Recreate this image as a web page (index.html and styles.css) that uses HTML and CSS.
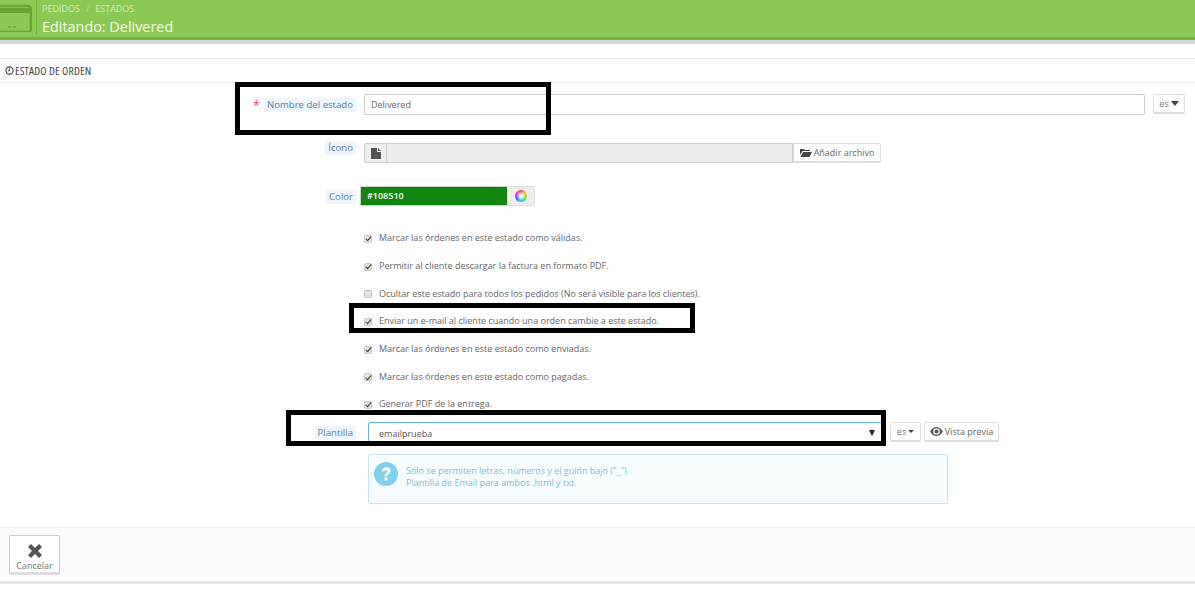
FILE: index.html
```html
<!DOCTYPE html>
<html lang="es">
<head>
<meta charset="utf-8">
<title>Editando: Delivered</title>
<link rel="stylesheet" href="styles.css">
</head>
<body>
<header class="head">
  <div class="head-icon">
    <svg width="32" height="32" viewBox="0 0 32 32"><rect x="-6" y="6" width="37" height="26" rx="3" fill="none" stroke="#6aa52f" stroke-width="2.5"/><rect x="-6" y="8" width="36" height="5" fill="#6aa52f"/><rect x="8" y="26" width="3" height="1.500" fill="#6aa52f"/><rect x="13" y="26" width="3" height="1.500" fill="#6aa52f"/></svg>
  </div>
  <div class="head-text">
    <div class="crumbs"><span>PEDIDOS</span><span class="sep">/</span><span>ESTADOS</span></div>
    <h1 class="title">Editando: Delivered</h1>
  </div>
</header>
<div class="head-shadow"></div>

<main class="panel">
  <h2 class="panel-title">
    <svg class="clock" width="9" height="9" viewBox="0 0 10 10"><circle cx="5" cy="5" r="4" fill="none" stroke="#444" stroke-width="1.2"/><path d="M5 2.600V5.400H3" fill="none" stroke="#444" stroke-width="1.100"/></svg>
    ESTADO DE ORDEN
  </h2>

  <div class="form">
    <div class="row row-name">
      <div class="lab"><span class="req">*</span><span class="tag">Nombre del estado</span></div>
      <div class="name-ctl">
        <div class="input">Delivered</div>
        <div class="btn btn-lang">es <svg width="8" height="5" viewBox="0 0 8 5"><path d="M0 0H8L4 5Z" fill="#444"/></svg></div>
      </div>
    </div>

    <div class="row row-icon">
      <div class="lab"><span class="tag">Ícono</span></div>
      <div class="file">
        <div class="file-addon"><svg width="10" height="11" viewBox="0 0 10 11"><path d="M0 0H6V4H10V11H0Z M7 0L10 3H7Z" fill="#555"/></svg></div>
        <div class="file-field"></div>
        <div class="file-btn"><svg width="12" height="9" viewBox="0 0 12 9"><path d="M0 1H4L5 2H10V3H2.500L0 7Z M3 4H12L9.500 9H0.500Z" fill="#444"/></svg>Añadir archivo</div>
      </div>
    </div>

    <div class="row row-color">
      <div class="lab"><span class="tag">Color</span></div>
      <div class="color">
        <div class="swatch">#108510</div>
        <div class="wheel-btn"><span class="wheel"></span></div>
      </div>
    </div>

    <div class="checks">
      <label class="check"><span class="box on"></span>Marcar las órdenes en este estado como válidas.</label>
      <label class="check"><span class="box on"></span>Permitir al cliente descargar la factura en formato PDF.</label>
      <label class="check"><span class="box"></span>Ocultar este estado para todos los pedidos (No será visible para los clientes).</label>
      <label class="check"><span class="box on"></span>Enviar un e-mail al cliente cuando una orden cambie a este estado.</label>
      <label class="check"><span class="box on"></span>Marcar las órdenes en este estado como enviadas.</label>
      <label class="check"><span class="box on"></span>Marcar las órdenes en este estado como pagadas.</label>
      <label class="check"><span class="box on"></span>Generar PDF de la entrega.</label>
    </div>

    <div class="row row-tpl">
      <div class="lab"><span class="tag">Plantilla</span></div>
      <div class="tpl">
        <div class="select">emailprueba<svg width="6" height="6" viewBox="0 0 6 6"><path d="M0 0H6L3 6Z" fill="#222"/></svg></div>
        <div class="btn btn-es">es <svg width="6" height="3" viewBox="0 0 6 3"><path d="M0 0H6L3 3Z" fill="#444"/></svg></div>
        <div class="btn btn-prev"><svg width="13" height="9" viewBox="0 0 13 9"><path fill-rule="evenodd" d="M0 4.500C2 1.500 4 0 6.500 0S11 1.500 13 4.500C11 7.500 9 9 6.500 9S2 7.500 0 4.500Z M6.500 1.200A3.300 3.300 0 1 0 6.500 7.800A3.300 3.300 0 1 0 6.500 1.200Z" fill="#555"/><circle cx="6.500" cy="4.500" r="2" fill="#555"/></svg>Vista previa</div>
      </div>
    </div>

    <div class="info">
      <svg class="info-icon" width="24" height="24" viewBox="0 0 24 24"><circle cx="12" cy="12" r="12" fill="#81cfeb"/><path d="M7.800 9.300C8 6.700 9.800 5.300 12.200 5.300C14.800 5.300 16.500 6.800 16.500 8.900C16.500 10.500 15.600 11.300 14.500 12.100C13.600 12.800 13.400 13.100 13.400 14.200H10.600C10.600 12.600 11 11.800 12.200 10.900C13.100 10.200 13.500 9.800 13.500 9.100C13.500 8.300 13 7.900 12.200 7.900C11.300 7.900 10.800 8.500 10.700 9.500Z M10.500 15.500H13.500V18.500H10.500Z" fill="#fff"/></svg>
      <p class="info-text">Sólo se permiten letras, números y el guión bajo ("_").<br>Plantilla de Email para ambos .html y txt.</p>
    </div>
  </div>

  <footer class="foot">
    <div class="cancel">
      <svg width="16" height="16" viewBox="0 0 16 16"><path d="M4 1L8 5L12 1L15 4L11 8L15 12L12 15L8 11L4 15L1 12L5 8L1 4Z" fill="#555"/></svg>
      <span>Cancelar</span>
    </div>
  </footer>
</main>

<div class="mark mark-name"></div>
<div class="mark mark-mail"></div>
<div class="mark mark-tpl"></div>
</body>
</html>
```

FILE: styles.css
```css
* { box-sizing: border-box; }
html, body { margin: 0; padding: 0; }
body {
  position: relative;
  height: 603px;
  overflow: hidden;
  background: #fff;
  font-family: "Open Sans", sans-serif;
  font-size: 9px;
  color: #666;
}
.head {
  display: flex;
  height: 40px;
  background: #8bc954;
  border-bottom: 3px solid #72b13c;
}
.head-icon {
  width: 37px;
  height: 35px;
  flex: none;
  border-right: 1px solid #72b13c;
  overflow: hidden;
}
.head-icon svg { display: block; }
.head-text { padding: 2px 0 0 5px; }
.crumbs {
  display: flex;
  gap: 6px;
  height: 13px;
  line-height: 13px;
  font-size: 9px;
  color: #d6ecbd;
}
.crumbs .sep { color: #b9dd96; }
.title {
  margin: 1px 0 0;
  font-size: 14.4px;
  line-height: 21px;
  font-weight: 400;
  color: #f4fae9;
}
.head-shadow { height: 4px; background: #d5d5d5; }
.panel { margin-top: 14px; border-top: 1px solid #e8e8e8; }
.panel-title {
  display: flex;
  align-items: center;
  gap: 1px;
  height: 24px;
  margin: 0;
  padding-left: 5px;
  border-bottom: 1px solid #eee;
  font-size: 11.5px;
  font-weight: 400;
  color: #444;
  font-stretch: condensed;
  letter-spacing: 0.15px;
}
.form { height: 444px; padding-top: 11px; }
.row { display: grid; grid-template-columns: 356px 1fr; column-gap: 8px; }
.lab { display: flex; justify-content: flex-end; align-items: flex-start; gap: 4px; }
.tag {
  padding: 0 3px;
  background: #eef6fc;
  border-radius: 2px;
  line-height: 14px;
  font-size: 9.6px;
  color: #5a7fa3;
}
.req { color: #e8435f; font-size: 13px; line-height: 15px; }
.row-name { height: 49px; }
.row-name .lab { padding-top: 4px; }
.name-ctl { display: flex; gap: 8px; padding-right: 10px; }
.input {
  flex: 1;
  height: 21px;
  padding-left: 6px;
  border: 1px solid #ccc;
  border-radius: 2px;
  line-height: 19px;
  color: #666;
}
.btn {
  display: flex;
  align-items: center;
  justify-content: center;
  border: 1px solid #ddd;
  border-bottom: 2px solid #ddd;
  border-radius: 2px;
  background: #fff;
  color: #777;
}
.btn-lang { width: 32px; height: 20px; gap: 2px; }
.row-icon { height: 43px; }
.row-icon .lab { margin-top: -2px; }
.file { display: flex; width: 517px; height: 20px; }
.file-addon {
  display: flex;
  align-items: center;
  justify-content: center;
  width: 23px;
  background: #eee;
  border: 1px solid #ccc;
  border-radius: 2px 0 0 2px;
}
.file-field { flex: 1; background: #eee; border: 1px solid #ccc; border-left: 0; }
.file-btn {
  display: flex;
  align-items: center;
  justify-content: center;
  gap: 2px;
  width: 88px;
  border: 1px solid #ddd;
  border-bottom: 2px solid #ddd;
  border-radius: 0 2px 2px 0;
  color: #666;
}
.row-color { height: 38px; }
.row-color .lab { padding-top: 4px; }
.color { display: flex; width: 175px; height: 20px; margin-left: -4px; }
.swatch {
  width: 147px;
  padding-left: 6px;
  background: #108510;
  border: 1px solid #ccc;
  border-right: 0;
  line-height: 18px;
  font-weight: 600;
  color: #fff;
}
.wheel-btn {
  display: flex;
  align-items: center;
  justify-content: center;
  width: 28px;
  background: #eee;
  border: 1px solid #ddd;
  border-radius: 0 2px 2px 0;
}
.wheel {
  width: 12px;
  height: 12px;
  border-radius: 50%;
  background: radial-gradient(circle, #fff 0 12%, rgba(255,255,255,0) 55%), conic-gradient(#ff4a4a, #ffd030, #50d850, #30d0e8, #5050ff, #e040e0, #ff4a4a);
}
.checks { display: flex; flex-direction: column; padding-left: 364px; }
.check {
  display: flex;
  align-items: center;
  height: 27.7px;
  font-size: 9px;
  color: #666;
}
.box {
  position: relative;
  width: 8px;
  height: 8px;
  margin: 2px 7px 0 0;
  flex: none;
  background: #e6e6e6;
  border: 1px solid #c4c4c4;
  border-radius: 2px;
}
.box.on::after {
  content: "";
  position: absolute;
  left: 2px;
  top: -0.5px;
  width: 2px;
  height: 5px;
  border: solid #333;
  border-width: 0 1.500px 1.500px 0;
  transform: rotate(40deg);
}
.row-tpl { height: 32px; margin-top: 4px; }
.row-tpl .lab { padding-top: 4px; }
.tpl { display: flex; gap: 3px; padding-left: 4px; }
.select {
  display: flex;
  align-items: center;
  justify-content: space-between;
  width: 515px;
  height: 22px;
  margin-right: 4px;
  padding: 1px 7px 0 10px;
  border: 1px solid #66afe9;
  border-radius: 2px;
  color: #555;
}
.btn-es { width: 31px; height: 20px; gap: 2px; }
.btn-prev { width: 75px; height: 20px; gap: 2px; color: #666; }
.info {
  display: flex;
  gap: 8px;
  width: 580px;
  height: 50px;
  margin-left: 368px;
  padding: 7px 5px;
  background: #f7fcfe;
  border: 1px solid #c5e5f2;
  border-radius: 2px;
}
.info-icon { flex: none; }
.info-text { margin: 3px 0 0; font-size: 9px; line-height: 12px; color: #7cbdd8; }
.foot {
  height: 57px;
  padding: 7px 9px;
  background: #fafbfc;
  border-top: 1px solid #eee;
  border-bottom: 3px solid #e4e4e4;
}
.cancel {
  display: flex;
  flex-direction: column;
  align-items: center;
  width: 51px;
  height: 40px;
  padding-top: 7px;
  background: #fff;
  border: 1px solid #ccc;
  border-bottom: 3px solid #ddd;
  border-radius: 2px;
  color: #777;
}
.cancel svg { flex: none; }
.cancel span { line-height: 13px; }
.mark { position: absolute; border: 5px solid #000; }
.mark-name { left: 235px; top: 82px; width: 316px; height: 53px; }
.mark-mail { left: 349px; top: 303px; width: 346px; height: 30px; }
.mark-tpl { left: 286px; top: 410px; width: 600px; height: 36px; }
```
